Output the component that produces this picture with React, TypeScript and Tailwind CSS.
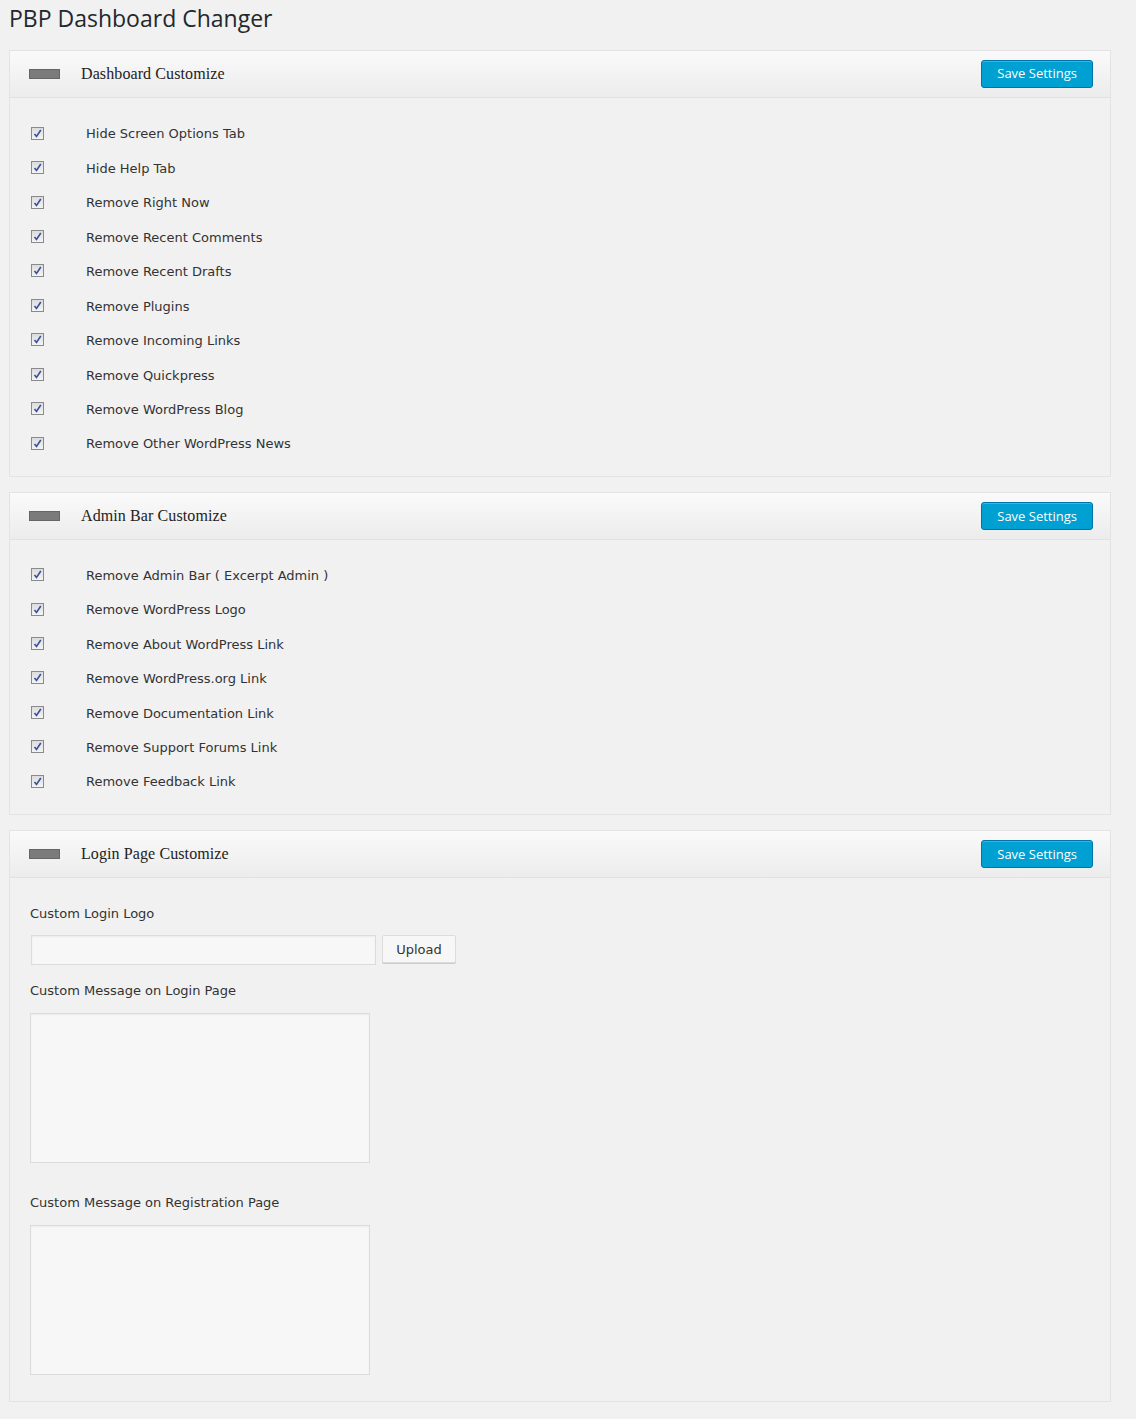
import React from 'react';

const dashboardItems = [
  'Hide Screen Options Tab',
  'Hide Help Tab',
  'Remove Right Now',
  'Remove Recent Comments',
  'Remove Recent Drafts',
  'Remove Plugins',
  'Remove Incoming Links',
  'Remove Quickpress',
  'Remove WordPress Blog',
  'Remove Other WordPress News',
];

const adminBarItems = [
  'Remove Admin Bar ( Excerpt Admin )',
  'Remove WordPress Logo',
  'Remove About WordPress Link',
  'Remove WordPress.org Link',
  'Remove Documentation Link',
  'Remove Support Forums Link',
  'Remove Feedback Link',
];

const body = { fontFamily: '"DejaVu Sans", Verdana, sans-serif' };

const Checkbox: React.FC = () => (
  <span className="inline-flex h-[13px] w-[13px] -translate-y-[1px] items-center justify-center border border-[#8a8a8a] bg-gradient-to-b from-[#dcdcdc] to-[#f4f4f4]">
    <svg width="9" height="9" viewBox="0 0 9 9">
      <path d="M1.5 5 L3.5 7.5 L7.8 1" fill="none" stroke="#3a4f9e" strokeWidth="1.6" />
    </svg>
  </span>
);

const PanelHeader: React.FC<{ title: string }> = ({ title }) => (
  <div className="flex h-[47px] items-center justify-between border-b border-[#e1e1e1] bg-gradient-to-b from-[#fafafa] to-[#ececec] pl-[19px] pr-[17px]">
    <div className="flex items-center">
      <span className="h-[10px] w-[31px] border border-[#666] bg-[#7b7b7b]" />
      <span
        className="ml-[21px] text-[16px] tracking-[0.1px] text-[#222]"
        style={{ fontFamily: '"Liberation Serif", Georgia, serif' }}
      >
        {title}
      </span>
    </div>
    <button
      className="h-[28px] rounded-[3px] border border-[#0073aa] bg-[#00a0d2] px-[15px] text-[13px] text-white shadow-[inset_0_1px_0_rgba(120,200,230,0.5)]"
      style={{ fontFamily: '"Open Sans", sans-serif' }}
    >
      Save Settings
    </button>
  </div>
);

const CheckList: React.FC<{ items: string[]; tight?: boolean }> = ({ items, tight }) => (
  <div className={tight ? 'pl-[21px] pt-[18px] pb-[15px]' : 'pl-[21px] pt-[19px] pb-[15px]'} style={body}>
    {items.map(item => (
      <div key={item} className="flex h-[34.45px] items-center">
        <Checkbox />
        <span className="ml-[42px] text-[13px] text-[#333]">{item}</span>
      </div>
    ))}
  </div>
);

export default function App() {
  return (
    <div className="min-h-[1419px] bg-[#f1f1f1] pl-[9px]">
      <h1
        className="pt-[2px] text-[23px] leading-[32px] text-[#23282d]"
        style={{ fontFamily: '"Open Sans", sans-serif' }}
      >
        PBP Dashboard Changer
      </h1>

      <div className="mt-[16px] w-[1102px] border border-[#e3e3e3] bg-[#f1f1f1]">
        <PanelHeader title="Dashboard Customize" />
        <CheckList items={dashboardItems} />
      </div>

      <div className="mt-[15px] w-[1102px] border border-[#e3e3e3] bg-[#f1f1f1]">
        <PanelHeader title="Admin Bar Customize" />
        <CheckList items={adminBarItems} tight />
      </div>

      <div className="mt-[15px] w-[1102px] border border-[#e3e3e3] bg-[#f1f1f1]">
        <PanelHeader title="Login Page Customize" />
        <div className="pl-[20px] pt-[27px] pb-[26px] text-[13px] text-[#333]" style={body}>
          <div className="leading-[18px]">Custom Login Logo</div>
          <div className="mt-[12px] flex items-start">
            <input
              type="text"
              className="ml-[1px] h-[30px] w-[345px] border border-[#dcdcdc] bg-[#f7f7f7] shadow-[inset_0_1px_2px_rgba(0,0,0,0.05)]"
            />
            <button className="ml-[6px] h-[28px] w-[74px] rounded-[2px] border border-[#dcdcdc] bg-[#f7f7f7] text-[13px] text-[#333] shadow-[0_1px_0_#ccc]">
              Upload
            </button>
          </div>
          <div className="mt-[17px] leading-[18px]">Custom Message on Login Page</div>
          <textarea className="mt-[13px] block h-[150px] w-[340px] resize-none border border-[#dcdcdc] bg-[#f7f7f7] shadow-[inset_0_1px_2px_rgba(0,0,0,0.05)]" />
          <div className="mt-[31px] leading-[18px]">Custom Message on Registration Page</div>
          <textarea className="mt-[13px] block h-[150px] w-[340px] resize-none border border-[#dcdcdc] bg-[#f7f7f7] shadow-[inset_0_1px_2px_rgba(0,0,0,0.05)]" />
        </div>
      </div>
    </div>
  );
}
